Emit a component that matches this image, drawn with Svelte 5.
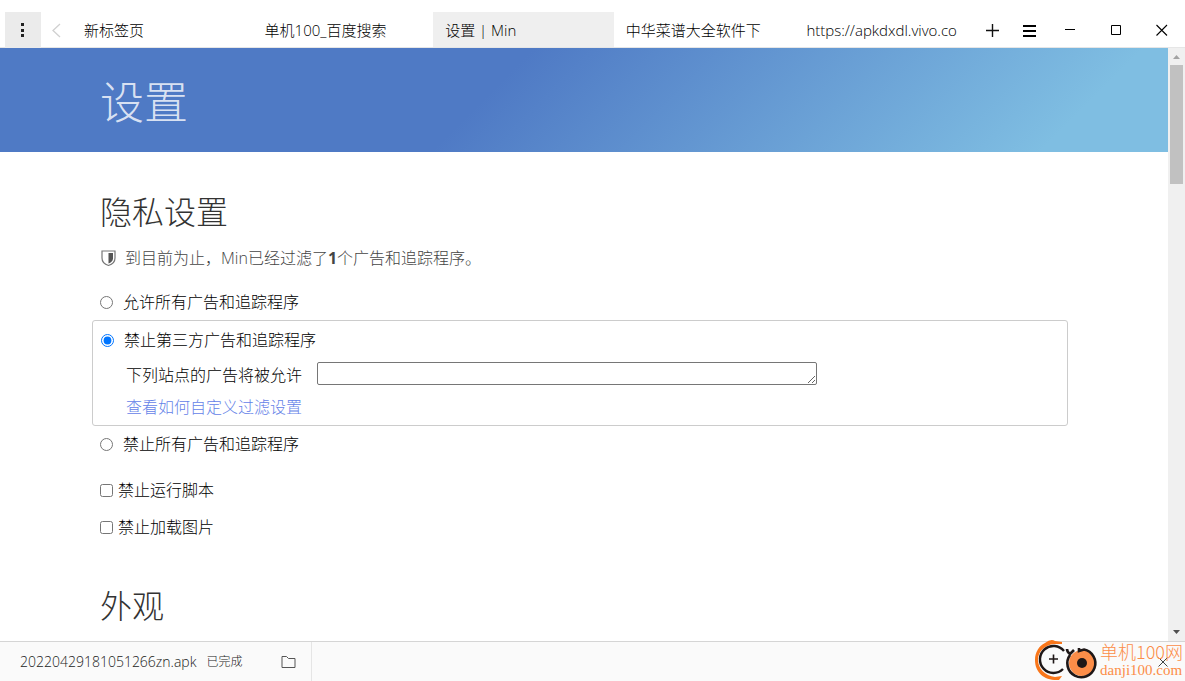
<script>
  let blocking = 'third-party';
  let exceptions = '';
  let blockScripts = false;
  let blockImages = false;

  const tabs = [
    { title: '新标签页' },
    { title: '单机100_百度搜索' },
    { title: '设置 | Min', selected: true },
    { title: '中华菜谱大全软件下' },
    { title: 'https://apkdxdl.vivo.co' },
  ];
</script>

<div class="window">
  <header class="toolbar">
    <button class="tool menu" aria-label="菜单">
      <svg viewBox="0 0 36 36"><path d="M16 11h3v3h-3zM16 17h3v3h-3zM16 22h3v3h-3z" fill="#222" /></svg>
    </button>
    <button class="tool back" aria-label="后退">
      <svg viewBox="0 0 31 36"><path d="M19 12l-7 6.500 7 6.500" fill="none" stroke="#d0d0d0" stroke-width="1.300" /></svg>
    </button>
    <nav class="tabs">
      {#each tabs as tab}
        <button class="tab" class:selected={tab.selected}>{tab.title}</button>
      {/each}
    </nav>
    <button class="tool" aria-label="新建标签页">
      <svg viewBox="0 0 36 36"><path d="M11 18.500h13M17.500 12v13" fill="none" stroke="#111" stroke-width="1.400" /></svg>
    </button>
    <button class="tool" aria-label="任务">
      <svg viewBox="0 0 36 36"><path d="M12 14h13M12 19h13M12 24h13" fill="none" stroke="#000" stroke-width="2" /></svg>
    </button>
    <button class="tool caption" aria-label="最小化">
      <svg viewBox="0 0 46 36"><path d="M18 17.500h10" fill="none" stroke="#000" /></svg>
    </button>
    <button class="tool caption" aria-label="最大化">
      <svg viewBox="0 0 46 36"><path d="M18.500 13.500h9v9h-9z" fill="none" stroke="#000" /></svg>
    </button>
    <button class="tool caption" aria-label="关闭">
      <svg viewBox="0 0 46 36"><path d="M17.500 13l10.500 10.500M28 13L17.500 23.500" fill="none" stroke="#000" stroke-width="1.100" /></svg>
    </button>
  </header>

  <div class="view">
    <main class="page">
      <div class="banner"><h1>设置</h1></div>

      <section>
        <h2>隐私设置</h2>
        <p class="stats">
          <svg viewBox="0 0 16 18">
            <path d="M1.500 2h13v7c0 4-3 6.500-6.500 7.500C4.500 15.500 1.500 13 1.500 9z" fill="none" stroke="#777" stroke-width="1.200" />
            <path d="M8 4h4.500v5.500c0 2.500-2 4-4.500 5z" fill="#555" />
          </svg>
          <span>到目前为止，Min已经过滤了<strong>1</strong>个广告和追踪程序。</span>
        </p>

        <div class="options">
          <div class="option">
            <label><input type="radio" bind:group={blocking} value="none" />允许所有广告和追踪程序</label>
          </div>
          <div class="option selected">
            <label><input type="radio" bind:group={blocking} value="third-party" />禁止第三方广告和追踪程序</label>
            <div class="exceptions">
              <label for="exceptions">下列站点的广告将被允许</label>
              <textarea id="exceptions" rows="1" bind:value={exceptions}></textarea>
            </div>
            <a href="#filters">查看如何自定义过滤设置</a>
          </div>
          <div class="option">
            <label><input type="radio" bind:group={blocking} value="all" />禁止所有广告和追踪程序</label>
          </div>
        </div>

        <label class="check"><input type="checkbox" bind:checked={blockScripts} />禁止运行脚本</label>
        <label class="check"><input type="checkbox" bind:checked={blockImages} />禁止加载图片</label>
      </section>

      <section>
        <h2>外观</h2>
      </section>
    </main>

    <div class="scrollbar">
      <svg viewBox="0 0 17 17"><path d="M5 11h7L8.500 7z" fill="#a3a3a3" /></svg>
      <div class="thumb"></div>
      <svg viewBox="0 0 17 17"><path d="M5 6h7l-3.500 4z" fill="#505050" /></svg>
    </div>
  </div>

  <footer class="downloads">
    <div class="download">
      <span class="file">20220429181051266zn.apk</span>
      <span class="status">已完成</span>
      <button class="folder" aria-label="打开文件夹">
        <svg viewBox="0 0 16 14"><path d="M1.500 1.500h4.500l2 2h6.500v9h-13z" fill="none" stroke="#555" /></svg>
      </button>
    </div>
    <button class="close" aria-label="关闭下载栏">
      <svg viewBox="0 0 12 12"><path d="M1.500 1.500l9 9M10.500 1.500l-9 9" fill="none" stroke="#444" /></svg>
    </button>
  </footer>

  <div class="watermark">
    <svg viewBox="0 0 64 42">
      <path d="M10 4Q16-1 20 2l7 1v2H19C10 6 3 12 3 21c0 8 7 16 17 17l7-1-3 4C10 42 0 34 0 21 0 13 4 7 10 4z" fill="#f9761a" />
      <path d="M29 12A13.500 13.500 0 1 0 28 30" fill="none" stroke="#1e1717" stroke-width="2.400" />
      <path d="M14 20h9M18.500 15.500v9" stroke="#1e1717" stroke-width="1.600" />
      <circle cx="47" cy="24" r="13" fill="#fc8d48" />
      <path d="M32 10q0 3 3 5l4-4M35 16A14 14 0 1 0 49 10.500L44 12V9" fill="none" stroke="#1e1717" stroke-width="2.600" />
      <circle cx="47" cy="24" r="5" fill="#1e1717" />
    </svg>
    <div class="mark-text">
      <span class="mark-name">单机100网</span>
      <span class="mark-url">danji100.com</span>
    </div>
  </div>
</div>

<style>
  :global(body) {
    margin: 0;
    background: #fff;
  }

  .window {
    position: relative;
    display: flex;
    flex-direction: column;
    height: 100vh;
    overflow: hidden;
    font-family: "Open Sans", "Noto Sans CJK SC", sans-serif;
    font-size: 16px;
    font-weight: 300;
    line-height: 24px;
    color: #000;
  }

  button {
    padding: 0;
    border: none;
    background: none;
    font: inherit;
    color: inherit;
  }
  svg { display: block; }

  /* Tab bar */
  .toolbar {
    display: flex;
    flex-shrink: 0;
    padding: 12px 0 0 5px;
    height: 35px;
    border-bottom: 1px solid #e6e6e6;
  }
  .tool {
    flex: none;
    width: 36px;
    height: 36px;
  }
  .tool.menu { background: #ebebeb; }
  .tool.back { width: 31px; }
  .tool.caption { width: 46px; }

  .tabs {
    display: flex;
    flex: 1;
    min-width: 0;
  }
  .tab {
    flex: 1;
    min-width: 0;
    height: 35px;
    padding: 0 12px;
    overflow: hidden;
    font-size: 15px;
    text-align: left;
    white-space: nowrap;
  }
  .tab.selected { background: #efefef; }

  /* Page and its scrollbar */
  .view {
    display: flex;
    flex: 1;
    min-height: 0;
  }
  .page {
    flex: 1;
    min-width: 0;
    overflow: hidden;
  }
  .banner {
    padding: 22px 100px 18px;
    background: linear-gradient(135deg, #4f7ac5 42%, #7fbee2 90%);
  }
  h1 {
    margin: 0;
    font-size: 44px;
    font-weight: 300;
    line-height: 64px;
    color: rgba(255, 255, 255, 0.8);
  }
  section { padding: 36px 100px 0; }
  h2 {
    margin: 0;
    font-size: 32px;
    font-weight: 300;
    line-height: 48px;
    color: #333;
  }
  .stats {
    display: flex;
    align-items: center;
    gap: 8px;
    margin: 8px 0 12px;
    line-height: 28px;
    color: #444;
  }
  .stats svg {
    width: 17px;
    height: 18px;
  }
  .stats strong { font-weight: 700; }

  .options { margin: 0 0 10px -8px; }
  .option { padding: 4px 8px; }
  .option.selected {
    border: 1px solid #ccc;
    border-radius: 3px;
    padding: 5px 8px 2px;
  }
  .option > label {
    display: flex;
    align-items: center;
    line-height: 28px;
  }
  input {
    margin: 0;
    width: 13px;
    height: 13px;
  }
  input[type="radio"] { margin-right: 10px; }
  .exceptions {
    display: flex;
    align-items: flex-start;
    gap: 15px;
    padding: 8px 0 3px 25px;
  }
  .exceptions label { line-height: 26px; }
  textarea {
    box-sizing: border-box;
    width: 500px;
    height: 23px;
    padding: 2px;
    border: 1px solid #767676;
    border-radius: 2px;
    font: inherit;
    font-size: 13px;
    line-height: 16px;
  }
  .option a {
    display: block;
    margin-left: 25px;
    line-height: 32px;
    color: #6482e8;
    text-decoration: none;
  }
  .check {
    display: flex;
    align-items: center;
    gap: 5px;
    padding: 4px 0;
    line-height: 29px;
  }

  .scrollbar {
    display: flex;
    flex-direction: column;
    width: 17px;
    background: #f0f0f0;
  }
  .scrollbar svg {
    width: 17px;
    height: 17px;
  }
  .scrollbar svg:last-child { margin-top: auto; }
  .thumb {
    height: 20%;
    margin: 0 2px;
    background: #c1c1c1;
  }

  /* Download bar */
  .downloads {
    display: flex;
    flex-shrink: 0;
    align-items: center;
    justify-content: space-between;
    border-top: 1px solid #d5d5d5;
    background: #fafafa;
    color: #222;
  }
  .download {
    display: flex;
    align-items: center;
    padding: 0 14px 0 20px;
    border-right: 1px solid #e5e5e5;
    line-height: 39px;
  }
  .file { font-size: 14px; }
  .status {
    margin: 0 38px 0 10px;
    font-size: 12px;
  }
  .folder svg {
    width: 17px;
    height: 14px;
  }
  .close { margin-right: 16px; }
  .close svg {
    width: 12px;
    height: 12px;
  }

  .watermark {
    position: absolute;
    right: 2px;
    bottom: 0;
    display: flex;
    gap: 1px;
    pointer-events: none;
    color: #fc8d48;
  }
  .watermark svg {
    width: 64px;
    height: 42px;
  }
  .mark-text {
    display: flex;
    flex-direction: column;
    font-weight: 400;
    white-space: nowrap;
  }
  .mark-name {
    font-family: "Noto Sans CJK SC", sans-serif;
    font-size: 18px;
    font-weight: 300;
    line-height: 24px;
  }
  .mark-url {
    font-family: "Liberation Serif", serif;
    font-size: 15px;
    line-height: 14px;
  }
</style>
